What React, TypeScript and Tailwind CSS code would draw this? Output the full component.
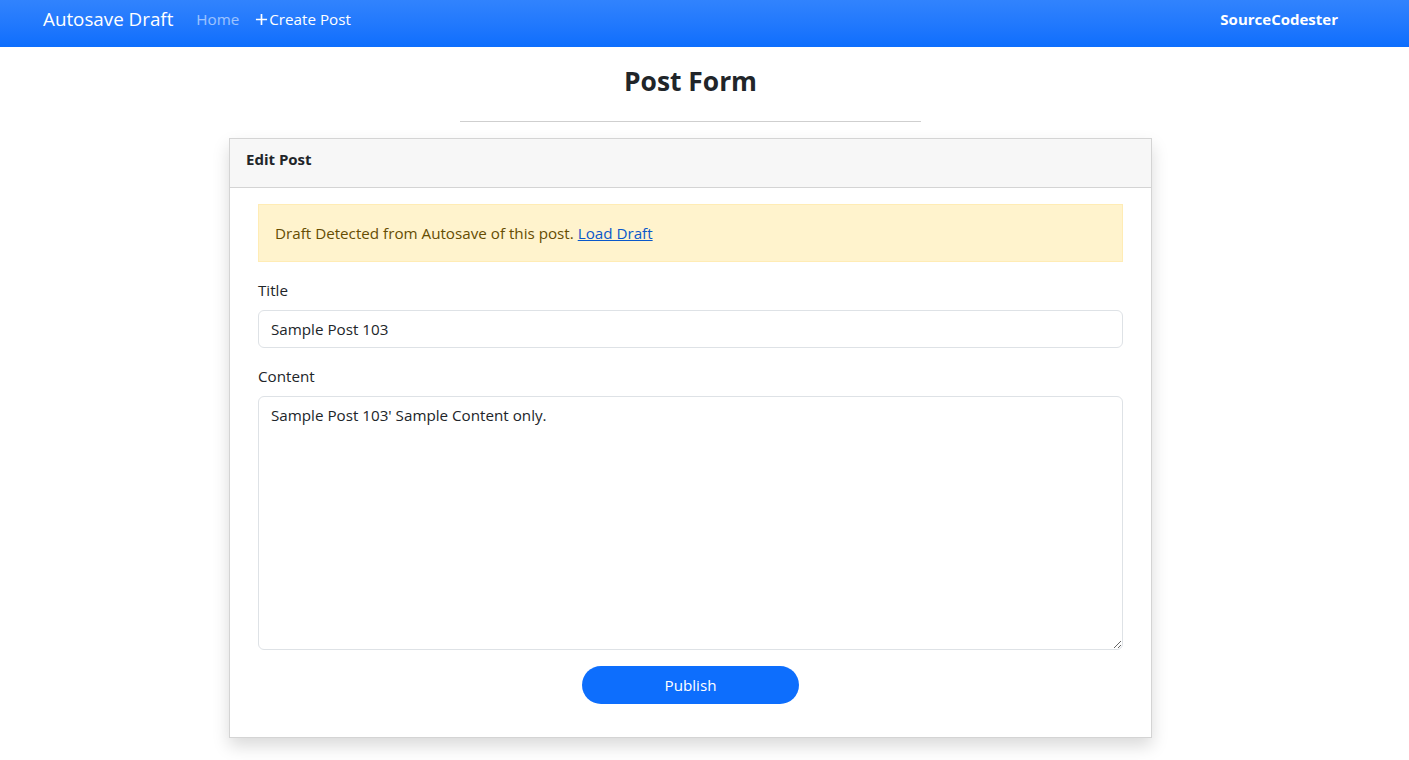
export default function App() {
  const font = { fontFamily: '"Open Sans", "Liberation Sans", sans-serif' };
  return (
    <div className="min-h-screen bg-white text-[#212529]" style={font}>
      <nav className="h-[47px] bg-[#0d6efd] bg-gradient-to-b from-[#3183fd] to-[#0d6efd] flex items-center pb-[8px] pl-[43px] pr-[71px]">
        <span className="text-white text-[18.8px] mr-[23px]">Autosave Draft</span>
        <a className="text-white/55 text-[15.2px] mr-[16px]">Home</a>
        <a className="text-white text-[15.2px] flex items-center">
          <svg width="13" height="13" viewBox="0 0 14 14" className="mr-[1px]">
            <path d="M7 1v12M1 7h12" stroke="white" strokeWidth="1.8" />
          </svg>
          Create Post
        </a>
        <span className="ml-auto text-white font-bold text-[15px]">SourceCodester</span>
      </nav>

      <div className="flex flex-col items-center pr-[28px]">
        <h3 className="mt-[17px] text-[26.4px] font-bold leading-[34px]">Post Form</h3>
        <div className="mt-[23px] w-[461px] h-px bg-[#cfcfcf]" />

        <div className="mt-[16px] w-[923px] border border-[#d4d4d4] shadow-[0_8px_16px_rgba(0,0,0,0.15)]">
          <div className="h-[49px] bg-[#f7f7f7] border-b border-[#d4d4d4] px-[16px] pb-[8px] flex items-center">
            <span className="font-bold text-[15px]">Edit Post</span>
          </div>
          <div className="px-[28px] pt-[16px] pb-[33px] text-[15.2px]">
            <div className="h-[58px] bg-[#fff3cd] border border-[#ffecb5] text-[#664d03] px-[16px] flex items-center">
              <span>
                Draft Detected from Autosave of this post.{" "}
                <a className="text-[#0a58ca] underline">Load Draft</a>
              </span>
            </div>
            <label className="block mt-[16px] mb-[8px] leading-[24px]">Title</label>
            <input
              defaultValue="Sample Post 103"
              className="w-full h-[38px] border border-[#dee2e6] rounded-[6px] px-[12px] outline-none"
            />
            <label className="block mt-[16px] mb-[8px] leading-[24px]">Content</label>
            <textarea
              defaultValue="Sample Post 103' Sample Content only."
              className="block w-full h-[254px] border border-[#dee2e6] rounded-[6px] px-[12px] py-[6px] leading-[24px] outline-none"
            />
            <div className="flex justify-center mt-[16px]">
              <button className="w-[217px] h-[38px] rounded-full bg-[#0d6efd] text-white">Publish</button>
            </div>
          </div>
        </div>
      </div>
    </div>
  );
}
